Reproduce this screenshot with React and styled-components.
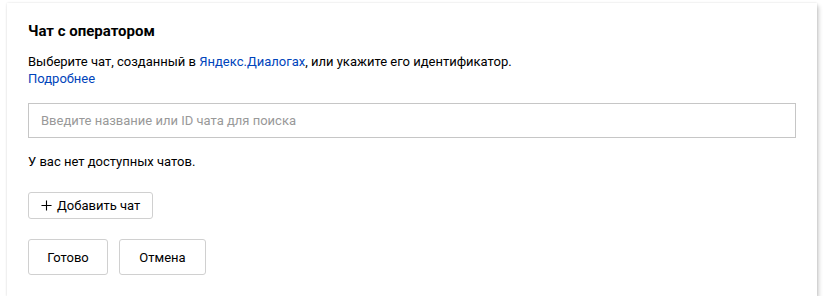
import React from "react";
import styled, { createGlobalStyle } from "styled-components";

const GlobalStyle = createGlobalStyle`
  body {
    margin: 0;
    background: #fff;
    font-family: Roboto, "Liberation Sans", Arial, sans-serif;
    color: #000;
  }
`;

export default function App() {
  return (
    <>
      <GlobalStyle />
      <Page>
        <Card>
          <Title>Чат с оператором</Title>
          <Hint>
            Выберите чат, созданный в <Link href="#">Яндекс.Диалогах</Link>, или укажите его идентификатор.
            <br />
            <Link href="#">Подробнее</Link>
          </Hint>
          <Search placeholder="Введите название или ID чата для поиска" />
          <Empty>У вас нет доступных чатов.</Empty>
          <AddRow>
            <Button $small>
              <Plus viewBox="0 0 12 12">
                <path d="M6 0.5v11M0.5 6h11" stroke="#000" strokeWidth="1.2" fill="none" />
              </Plus>
              Добавить чат
            </Button>
          </AddRow>
          <Actions>
            <Button $wide="80px">Готово</Button>
            <Button $wide="87px">Отмена</Button>
          </Actions>
        </Card>
      </Page>
    </>
  );
}

const Page = styled.div`
  padding: 3px 7px 0 7px;
`;

const Card = styled.section`
  box-sizing: border-box;
  width: 810px;
  height: 293px;
  padding: 18px 21px 20px;
  background: #fff;
  box-shadow: 0 0 2px rgba(0, 0, 0, 0.12), 2px 3px 4px rgba(0, 0, 0, 0.18);
  display: flex;
  flex-direction: column;
`;

const Title = styled.h2`
  margin: 0;
  font-size: 15px;
  line-height: 20px;
  font-weight: 700;
`;

const Hint = styled.p`
  margin: 12px 0 0;
  font-size: 13px;
  line-height: 17px;
`;

const Link = styled.a`
  color: #04b;
  text-decoration: none;
`;

const Search = styled.input`
  box-sizing: border-box;
  margin-top: 16px;
  height: 35px;
  width: 100%;
  border: 1px solid #c6c6c6;
  padding: 0 12px;
  font-family: inherit;
  font-size: 13px;
  outline: none;

  &::placeholder {
    color: #999;
  }
`;

const Empty = styled.div`
  margin-top: 15px;
  font-size: 13px;
  line-height: 17px;
`;

const AddRow = styled.div`
  margin-top: 22px;
  display: flex;
`;

const Actions = styled.div`
  margin-top: 20px;
  display: flex;
  gap: 11px;
`;

const Button = styled.button`
  box-sizing: border-box;
  height: ${(p) => (p.$small ? "27px" : "36px")};
  width: ${(p) => p.$wide || "auto"};
  padding: ${(p) => (p.$small ? "0 12px" : "0")};
  display: inline-flex;
  align-items: center;
  justify-content: center;
  gap: 5px;
  background: #fff;
  border: 1px solid #d0d0d0;
  border-radius: 3px;
  font-family: inherit;
  font-size: 13px;
  color: #000;
  cursor: pointer;
`;

const Plus = styled.svg`
  width: 11px;
  height: 11px;
`;
